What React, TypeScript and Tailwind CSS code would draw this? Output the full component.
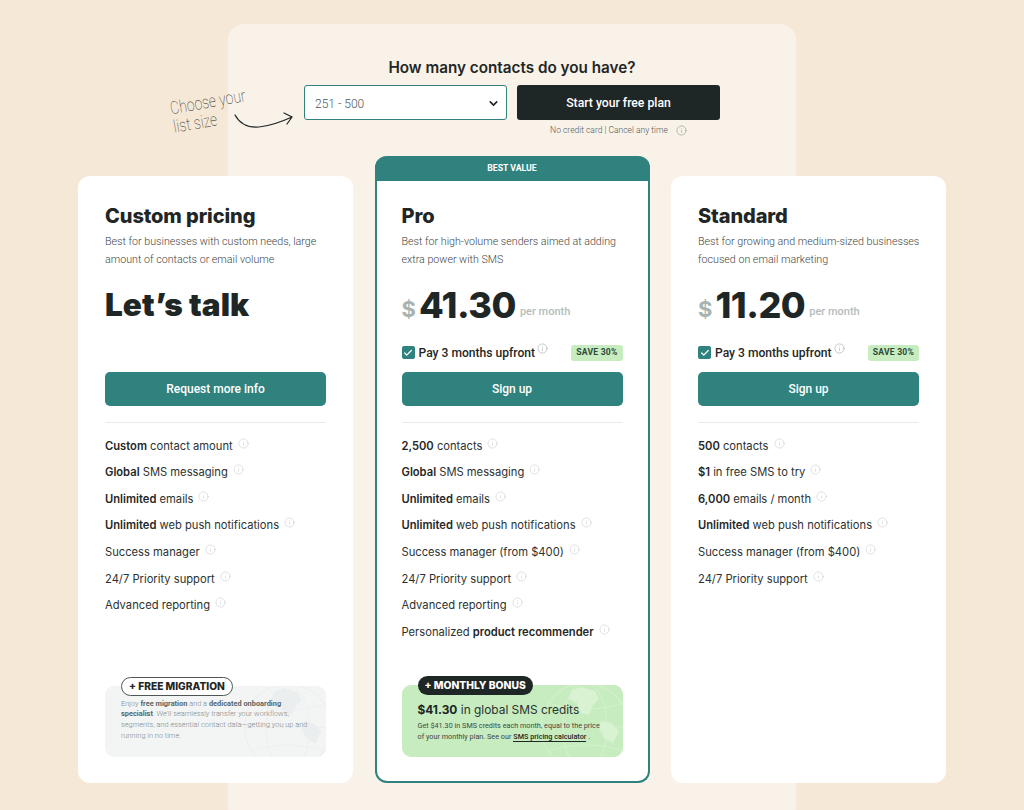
import React from 'react';
import { Check, ChevronDown, Info } from 'lucide-react';

const heading = "font-['Inter',sans-serif]";
const body = "font-['Roboto',sans-serif]";

interface Feature {
  bold?: string;
  text?: string;
  boldAfter?: string;
}

interface Plan {
  name: string;
  desc: string[];
  price?: string;
  cta: string;
  features: Feature[];
}

const plans: Record<string, Plan> = {
  custom: {
    name: 'Custom pricing',
    desc: ['Best for businesses with custom needs, large', 'amount of contacts or email volume'],
    cta: 'Request more info',
    features: [
      { bold: 'Custom', text: ' contact amount' },
      { bold: 'Global', text: ' SMS messaging' },
      { bold: 'Unlimited', text: ' emails' },
      { bold: 'Unlimited', text: ' web push notifications' },
      { text: 'Success manager' },
      { text: '24/7 Priority support' },
      { text: 'Advanced reporting' },
    ],
  },
  pro: {
    name: 'Pro',
    desc: ['Best for high-volume senders aimed at adding', 'extra power with SMS'],
    price: '41.30',
    cta: 'Sign up',
    features: [
      { bold: '2,500', text: ' contacts' },
      { bold: 'Global', text: ' SMS messaging' },
      { bold: 'Unlimited', text: ' emails' },
      { bold: 'Unlimited', text: ' web push notifications' },
      { text: 'Success manager (from $400)' },
      { text: '24/7 Priority support' },
      { text: 'Advanced reporting' },
      { text: 'Personalized ', boldAfter: 'product recommender' },
    ],
  },
  standard: {
    name: 'Standard',
    desc: ['Best for growing and medium-sized businesses', 'focused on email marketing'],
    price: '11.20',
    cta: 'Sign up',
    features: [
      { bold: '500', text: ' contacts' },
      { bold: '$1', text: ' in free SMS to try' },
      { bold: '6,000', text: ' emails / month' },
      { bold: 'Unlimited', text: ' web push notifications' },
      { text: 'Success manager (from $400)' },
      { text: '24/7 Priority support' },
    ],
  },
};

const Globe = ({ color }: { color: string }) => (
  <svg viewBox="0 0 100 72" className="absolute right-0 top-0 h-full w-[100px]" fill="none">
    <circle cx="62" cy="42" r="44" stroke={color} strokeWidth="1" />
    <ellipse cx="62" cy="42" rx="22" ry="44" stroke={color} strokeWidth="0.8" />
    <path d="M18 42h82M26 18c20 8 52 8 74 0M26 66c20-8 52-8 74 0" stroke={color} strokeWidth="0.8" />
    <path d="M48 6l10-4 14 4 4 8-6 6-4 10-8-2-4-10-8-4zM78 36l10 2 8 8-6 12-8-4-6-10z" fill={color} />
  </svg>
);

const PlanBody = ({ plan, children }: { plan: Plan; children: React.ReactNode }) => (
  <>
    <h2 className={`${heading} text-[20px] leading-[22px] font-extrabold tracking-[-0.1px] text-[#1f2626]`}>{plan.name}</h2>
    <p className={`${body} mt-[6px] text-[10.7px] leading-[18.5px] font-light text-[#3f4746] whitespace-nowrap`}>
      {plan.desc[0]}
      <br />
      {plan.desc[1]}
    </p>
    {plan.price ? (
      <>
        <div className="mt-[4px] flex h-[62px] items-center">
          <span className={`${heading} mt-[10px] mr-[3px] text-[22px] font-bold text-[#a9b3b1]`}>$</span>
          <span className={`${heading} text-[36px] leading-none font-extrabold tracking-[-0.5px] text-[#1f2626]`}>{plan.price}</span>
          <span className={`${body} mt-[14px] ml-[4px] text-[11px] font-medium text-[#b4bdbb]`}>per month</span>
        </div>
        <div className="mt-[7px] flex h-[20px] items-center">
          <span className="flex h-[13px] w-[13px] items-center justify-center rounded-[2px] bg-[#2f827e]">
            <Check size={10} strokeWidth={3} className="text-white" />
          </span>
          <span className={`${body} ml-[4px] text-[12.1px] font-medium text-[#1f2626]`}>Pay 3 months upfront</span>
          <Info size={11} strokeWidth={1.25} className="mb-[8px] ml-[2px] text-[#9aa5a3]" />
          <span className={`${body} ml-auto flex h-[16px] items-center rounded-[3px] bg-[#c6ecbf] px-[5px] text-[8.6px] font-bold tracking-[0.2px] text-[#2e4a3a]`}>SAVE 30%</span>
        </div>
      </>
    ) : (
      <div className={`${heading} mt-[4px] mb-[27px] flex h-[62px] items-center text-[31.5px] font-black text-[#1f2626]`}>Let’s talk</div>
    )}
    <button className={`${body} mt-[9px] h-[34px] w-full rounded-[5px] bg-[#2f827e] text-[12px] font-medium text-white`}>{plan.cta}</button>
    <div className="mt-[16px] border-t border-[#e8ebea]" />
    <ul className="mt-[10px]">
      {plan.features.map((f, i) => (
        <li key={i} className={`${heading} flex h-[26.6px] items-center text-[11.2px] text-[#2b3231] whitespace-nowrap`}>
          <span>
            {f.bold && <b className="font-semibold text-[#1f2626]">{f.bold}</b>}
            {f.text}
            {f.boldAfter && <b className="font-semibold text-[#1f2626]">{f.boldAfter}</b>}
          </span>
          <Info size={11} strokeWidth={1} className="mb-[6px] ml-[5px] text-[#b9c2c0]" />
        </li>
      ))}
    </ul>
    {children}
  </>
);

export default function App() {
  return (
    <div className="h-[810px] overflow-hidden bg-[#f5e8d6] pt-[24px]">
      <div className="relative mx-auto h-[800px] w-[568px] rounded-[16px] bg-[#f9f2e8] pt-[34px]">
        <h1 className={`${heading} text-center text-[15.25px] leading-[20px] font-semibold text-[#1f2626]`}>How many contacts do you have?</h1>

        {/* Handwritten note next to the select */}
        <div className="absolute left-[-56px] top-[79px] origin-left -rotate-[10deg] scale-y-125 font-['Roboto',sans-serif] text-[14px] leading-[15px] font-thin text-[#1f2626]">
          Choose your
          <br />
          list size
        </div>
        <svg className="absolute left-[6px] top-[87px]" width="62" height="22" viewBox="0 0 62 22" fill="none">
          <path d="M1 4c5 9 13 13 24 12 11-1 22-5 33-10M50 2l8 4-5 7" stroke="#1f2626" strokeWidth="1.2" strokeLinecap="round" />
        </svg>

        <div className="mt-[7px] flex gap-[10px] pl-[76px]">
          <div className="relative w-[203px]">
            <select defaultValue="251 - 500" className={`${body} h-[35px] w-full appearance-none rounded-[3px] border border-[#2f827e] bg-white pl-[10px] pt-[2px] text-[12px] font-light text-[#4f5756]`}>
              <option>251 - 500</option>
            </select>
            <ChevronDown size={13} strokeWidth={3} className="pointer-events-none absolute right-[7px] top-[12px] text-[#1f2626]" />
          </div>
          <div className="w-[203px]">
            <button className={`${body} h-[35px] w-full rounded-[3px] bg-[#1f2626] pt-[1px] text-[12.2px] font-medium text-white`}>Start your free plan</button>
            <div className={`${body} mt-[4px] flex items-center justify-center text-[8.5px] font-light text-[#4f5756]`}>
              No credit card | Cancel any time
              <Info size={11} strokeWidth={1} className="ml-[8px] text-[#6f7876]" />
            </div>
          </div>
        </div>

        <div className="mx-[-150px] mt-[19px] flex h-[627px] items-end justify-between">
          <section className="flex h-[607px] w-[275px] flex-col rounded-[12px] bg-white px-[27px] pb-[26px] pt-[29px]">
            <PlanBody plan={plans.custom}>
              <div className="relative mt-auto h-[71px] rounded-[9px] bg-[#f3f5f5]">
                <Globe color="#ebeeee" />
                <span className={`${heading} absolute left-[16px] top-[-9px] flex h-[19px] items-center rounded-full border border-[#4f5756] bg-white px-[7px] text-[10.2px] font-extrabold text-[#1f2626]`}>+ FREE MIGRATION</span>
                <p className={`${body} relative pl-[16px] pt-[13px] text-[7.4px] leading-[10.7px] font-light text-[#7e8886] whitespace-nowrap`}>
                  Enjoy <b className="font-bold text-[#5c6563]">free migration</b> and a <b className="font-bold text-[#5c6563]">dedicated onboarding</b>
                  <br />
                  <b className="font-bold text-[#5c6563]">specialist</b>. We'll seamlessly transfer your workflows,
                  <br />
                  segments, and essential contact data—getting you up and
                  <br />
                  running in no time.
                </p>
              </div>
            </PlanBody>
          </section>

          <section className="flex h-[627px] w-[275px] flex-col rounded-[12px] border-2 border-t-0 border-[#2f827e] bg-white">
            <div className={`${body} mx-[-2px] flex h-[25px] shrink-0 items-center justify-center rounded-t-[12px] bg-[#2f827e] text-[8.7px] font-bold text-white`}>BEST VALUE</div>
            <div className="flex flex-1 flex-col px-[25px] pb-[24px] pt-[24px]">
              <PlanBody plan={plans.pro}>
                <div className="relative mt-auto h-[72px] rounded-[9px] bg-[#c6ecbf]">
                  <Globe color="#d8f2d2" />
                  <span className={`${heading} absolute left-[16px] top-[-9px] flex h-[19px] items-center rounded-full bg-[#1f2626] px-[7px] text-[10.3px] font-extrabold text-white`}>+ MONTHLY BONUS</span>
                  <div className="relative pl-[16px] pt-[17px]">
                    <div className={`${heading} text-[11.9px] leading-[16px] text-[#2b3231] whitespace-nowrap`}>
                      <b className="font-bold text-[#1f2626]">$41.30</b> in global SMS credits
                    </div>
                    <p className={`${body} mt-[2px] text-[7.25px] leading-[11px] text-[#3f4947] whitespace-nowrap`}>
                      Get $41.30 in SMS credits each month, equal to the price
                      <br />
                      of your monthly plan. See our <span className="border-b border-[#1f2626] font-medium text-[#1f2626]">SMS pricing calculator</span> .
                    </p>
                  </div>
                </div>
              </PlanBody>
            </div>
          </section>

          <section className="flex h-[607px] w-[275px] flex-col rounded-[12px] bg-white px-[27px] pb-[26px] pt-[29px]">
            <PlanBody plan={plans.standard}>{null}</PlanBody>
          </section>
        </div>
      </div>
    </div>
  );
}
